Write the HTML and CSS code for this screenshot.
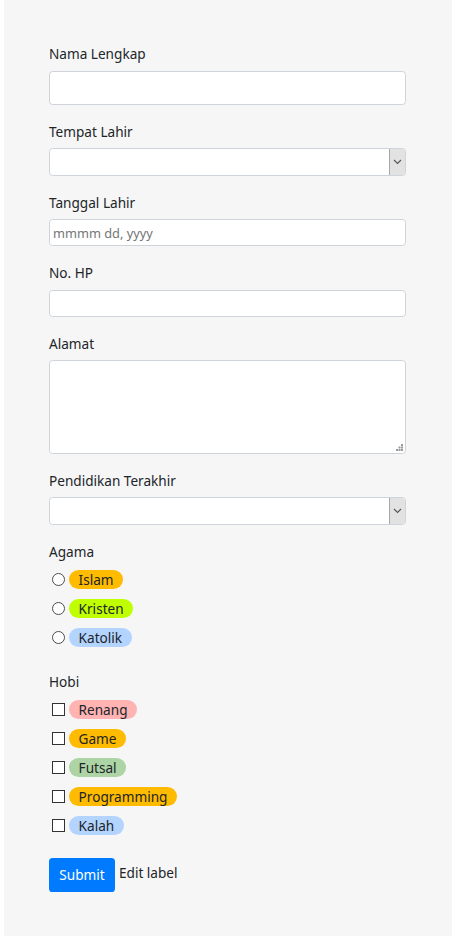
FILE: index.html
```html
<!DOCTYPE html>
<html lang="id">
<head>
<meta charset="utf-8">
<title>Form</title>
<link rel="stylesheet" href="styles.css">
</head>
<body>
<div class="panel">
  <form class="form">
    <div class="group">
      <label class="label">Nama Lengkap</label>
      <input class="control control-lg" type="text">
    </div>
    <div class="group">
      <label class="label">Tempat Lahir</label>
      <div class="select">
        <select class="select-input"><option></option></select>
        <span class="select-btn"><svg width="9" height="6" viewBox="0 0 9 6"><path d="M1 1 L4.5 4.5 L8 1" fill="none" stroke="#555" stroke-width="1.1"/></svg></span>
      </div>
    </div>
    <div class="group">
      <label class="label">Tanggal Lahir</label>
      <input class="control" type="text" placeholder="mmmm dd, yyyy">
    </div>
    <div class="group">
      <label class="label">No. HP</label>
      <input class="control" type="text">
    </div>
    <div class="group">
      <label class="label">Alamat</label>
      <div class="textarea-wrap">
        <textarea class="textarea"></textarea>
        <svg class="grip" width="7" height="7" viewBox="0 0 7 7"><g fill="#9a9a9a"><rect x="5" y="0" width="2" height="2"/><rect x="2.5" y="2.5" width="2" height="2"/><rect x="5" y="2.5" width="2" height="2"/><rect x="0" y="5" width="2" height="2"/><rect x="2.5" y="5" width="2" height="2"/><rect x="5" y="5" width="2" height="2"/></g></svg>
      </div>
    </div>
    <div class="group">
      <label class="label">Pendidikan Terakhir</label>
      <div class="select">
        <select class="select-input"><option></option></select>
        <span class="select-btn"><svg width="9" height="6" viewBox="0 0 9 6"><path d="M1 1 L4.5 4.5 L8 1" fill="none" stroke="#555" stroke-width="1.1"/></svg></span>
      </div>
    </div>
    <div class="group group-choices">
      <div class="label label-choices">Agama</div>
      <label class="choice"><input class="radio" type="radio" name="agama"><span class="badge badge-amber">Islam</span></label>
      <label class="choice"><input class="radio" type="radio" name="agama"><span class="badge badge-lime">Kristen</span></label>
      <label class="choice"><input class="radio" type="radio" name="agama"><span class="badge badge-blue">Katolik</span></label>
    </div>
    <div class="group group-choices group-hobi">
      <div class="label label-choices">Hobi</div>
      <label class="choice"><input class="check" type="checkbox"><span class="badge badge-pink">Renang</span></label>
      <label class="choice"><input class="check" type="checkbox"><span class="badge badge-amber">Game</span></label>
      <label class="choice"><input class="check" type="checkbox"><span class="badge badge-green">Futsal</span></label>
      <label class="choice"><input class="check" type="checkbox"><span class="badge badge-amber">Programming</span></label>
      <label class="choice"><input class="check" type="checkbox"><span class="badge badge-blue">Kalah</span></label>
    </div>
    <div class="actions">
      <button class="btn" type="button">Submit</button>
      <span class="edit">Edit label</span>
    </div>
  </form>
</div>
</body>
</html>
```

FILE: styles.css
```css
* { box-sizing: border-box; }
html, body { margin: 0; padding: 0; background: #ffffff; }
body {
  font-family: "Noto Sans", "Open Sans", sans-serif;
  color: #212529;
  font-size: 13.6px;
}
.panel {
  margin: 0 6px 0 4px;
  width: 448px;
  height: 936px;
  background: #f6f6f6;
  padding: 41.4px 46px 0 45px;
}
.form { display: flex; flex-direction: column; }
.group { display: flex; flex-direction: column; margin-bottom: 14.4px; }
.label {
  display: block;
  font-size: 13.6px;
  line-height: 21.6px;
  padding-top: 1.5px;
  margin-bottom: 6.1px;
}
.control {
  width: 100%;
  height: 27px;
  border: 1px solid #ced4da;
  border-radius: 3.6px;
  background: #fff;
  padding: 0 3px;
  font-family: "Noto Sans", "Open Sans", sans-serif;
  font-size: 12.8px;
  color: #212529;
  outline: none;
}
.control-lg { height: 34.2px; }
.control::placeholder { color: #757575; }
.select {
  display: flex;
  height: 27.4px;
  border: 1px solid #ced4da;
  border-radius: 3.6px;
  background: #fff;
  overflow: hidden;
}
.select-input {
  flex: 1;
  border: none;
  background: transparent;
  appearance: none;
  -webkit-appearance: none;
  outline: none;
}
.select-btn {
  width: 17px;
  display: flex;
  align-items: center;
  justify-content: center;
  background: #e2e2e2;
  border: 1px solid #a8a8a8;
  margin: -1px -1px -1px 0;
}
.textarea-wrap {
  position: relative;
  height: 93.3px;
}
.textarea {
  display: block;
  width: 100%;
  height: 100%;
  border: 1px solid #ced4da;
  border-radius: 3.6px;
  background: #fff;
  resize: none;
  outline: none;
}
.grip { position: absolute; right: 3px; bottom: 3px; }
.group-choices { margin-bottom: 17.4px; }
.label-choices { margin-bottom: 2.5px; }
.choice {
  display: flex;
  align-items: center;
  height: 29px;
}
.radio, .check {
  appearance: none;
  -webkit-appearance: none;
  width: 13px;
  height: 13px;
  margin: 0 4px 0 3px;
  background: #fff;
  flex: none;
}
.radio { border: 1px solid #4d4d4d; border-radius: 50%; }
.check { border: 1px solid #333; border-radius: 0; }
.badge {
  display: inline-block;
  height: 19px;
  line-height: 19px;
  padding: 0 9.6px;
  border-radius: 10px;
  font-size: 13.6px;
  color: #212529;
}
.badge-amber { background: #ffbb00; }
.badge-lime { background: #bfff00; }
.badge-blue { background: #b3d4ff; }
.badge-pink { background: #ffb3b3; }
.badge-green { background: #acd4a4; }
.group-hobi { margin-bottom: 18px; }
.actions { display: flex; align-items: center; gap: 4px; }
.btn {
  height: 34.2px;
  width: 66px;
  padding: 0;
  border: none;
  border-radius: 3.6px;
  background: #007bff;
  color: #fff;
  font-family: "Noto Sans", "Open Sans", sans-serif;
  font-size: 13.6px;
}
.edit { font-size: 13.6px; line-height: 21.6px; margin-top: -4px; }
```
